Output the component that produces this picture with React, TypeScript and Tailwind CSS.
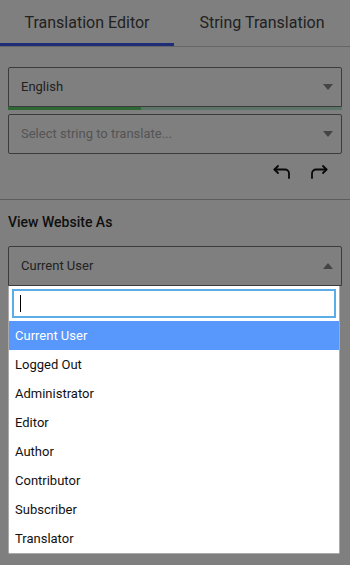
import React from "react";

const Caret = ({ up = false }: { up?: boolean }) => (
  <svg width="10" height="6" viewBox="0 0 10 6" className="shrink-0">
    {up ? <path d="M0 6 L5 0 L10 6 Z" fill="#888" /> : <path d="M0 0 L5 6 L10 0 Z" fill="#888" />}
  </svg>
);

export default function App() {
  const options = [
    "Current User",
    "Logged Out",
    "Administrator",
    "Editor",
    "Author",
    "Contributor",
    "Subscriber",
    "Translator",
  ];
  return (
    <div
      className="relative w-[350px] h-[565px] bg-white overflow-hidden"
      style={{ fontFamily: "Roboto, 'Noto Sans', sans-serif" }}
    >
      {/* Tabs */}
      <div className="flex border-b border-[#cccccc]">
        <div className="w-[174px] h-[46px] flex items-center justify-center border-b-[3px] border-[#3c5bf0] text-[16px] text-[#444] pt-[3px]">
          Translation Editor
        </div>
        <div className="flex-1 h-[46px] flex items-center justify-center text-[16px] text-[#444] pb-0">
          String Translation
        </div>
      </div>

      <div className="px-2 pt-5">
        <div className="h-[40px] border border-[#777] rounded-t-[2px] flex items-center justify-between pl-3 pr-[8px] text-[13px] text-[#444]">
          <span>English</span>
          <Caret />
        </div>
        <div className="flex h-[3px]">
          <div className="w-[133px] bg-[#5cd16a]" />
          <div className="flex-1 bg-[#b6ecd2]" />
        </div>
        <div className="mt-[4px] h-[40px] border border-[#777] rounded-[2px] flex items-center justify-between pl-3 pr-[8px] text-[13px] text-[#aaa]">
          <span>Select string to translate...</span>
          <Caret />
        </div>
        <div className="flex justify-end gap-[17px] pr-[14px] pt-[10px] h-[44px]">
          <svg width="19" height="16" viewBox="0 0 19 16" fill="none" stroke="#111" strokeWidth="1.8" strokeLinecap="round" strokeLinejoin="round">
            <path d="M5 2 L1.5 5.5 L5 9" />
            <path d="M1.5 5.5 H12 A4 4 0 0 1 16 9.5 V14" />
          </svg>
          <svg width="19" height="16" viewBox="0 0 19 16" fill="none" stroke="#111" strokeWidth="1.8" strokeLinecap="round" strokeLinejoin="round">
            <path d="M14 2 L17.5 5.5 L14 9" />
            <path d="M17.5 5.5 H7 A4 4 0 0 0 3 9.5 V14" />
          </svg>
        </div>
      </div>

      <div className="border-t border-[#bbb] mt-[1px]" />

      <div className="px-2 pt-[12px]">
        <div className="text-[14px] font-medium text-[#1e1e1e] leading-[20px]">View Website As</div>
        <div className="relative mt-[14px]">
          <div className="h-[40px] border border-[#777] rounded-t-[2px] flex items-center justify-between pl-3 pr-[8px] text-[13px] text-[#444]">
            <span>Current User</span>
            <Caret up />
          </div>
        </div>
      </div>

      {/* Overlay */}
      <div className="absolute inset-0 bg-black/50" />

      {/* Dropdown */}
      <div className="absolute left-[8px] top-[286px] w-[332px] bg-white border border-[#aaa] border-t-0 rounded-b-[2px] z-10">
        <div className="px-[3px] pt-[3px] pb-[3px]">
          <div className="h-[29px] border-2 border-[#5aade6] flex items-center pl-[6px]">
            <span className="w-[1px] h-[17px] bg-black" />
          </div>
        </div>
        <div className="text-[13px]">
          {options.map((o, i) => (
            <div
              key={o}
              className={
                "h-[29px] flex items-center pl-[6px] " +
                (i === 0 ? "bg-[#5897fb] text-white" : "text-[#111]")
              }
            >
              {o}
            </div>
          ))}
        </div>
      </div>
    </div>
  );
}
